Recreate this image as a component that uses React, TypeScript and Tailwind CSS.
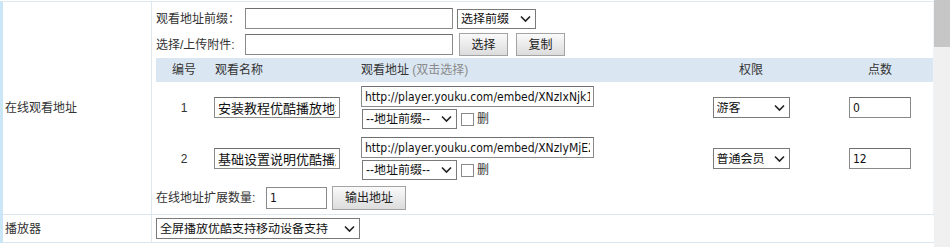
import React from "react";

const font = { fontFamily: '"Liberation Sans", "Noto Sans CJK SC", sans-serif' };
const inFont = { fontFamily: '"DejaVu Sans Condensed", "DejaVu Sans", "Noto Sans CJK SC", sans-serif' };

function Chevron() {
  return (
    <svg width="11" height="7" viewBox="0 0 11 7" className="pointer-events-none absolute right-[5px] top-1/2 -translate-y-1/2">
      <polyline points="1,1 5.5,5.5 10,1" fill="none" stroke="#222" strokeWidth="1.6" />
    </svg>
  );
}

function Sel({ w, h = 20, label }: { w: string; h?: number; label: string }) {
  return (
    <span className={`relative inline-flex shrink-0 ${w}`}>
      <select
        className={`w-full appearance-none border border-[#7a7a7a] bg-white pl-[3px] pr-[18px] text-[12px] text-[#111] leading-none outline-none ${h === 21 ? "h-[21px]" : "h-[20px]"}`}
        defaultValue={label}
      >
        <option value={label}>{label}</option>
      </select>
      <Chevron />
    </span>
  );
}

function Txt({ w, value, big }: { w: string; value: string; big?: boolean }) {
  return (
    <input
      readOnly
      defaultValue={value}
      style={inFont}
      className={`h-[21px] shrink-0 border border-[#8a8a8a] border-t-[#6f6f6f] bg-white px-[3px] text-[#111] outline-none ${big ? "text-[13px]" : "text-[12px]"} ${w}`}
    />
  );
}

function Btn({ w, h, label }: { w: string; h: string; label: string }) {
  return (
    <button className={`shrink-0 border border-[#a3a3a3] bg-gradient-to-b from-[#fafafa] to-[#dcdcdc] text-[12px] text-[#222] ${w} ${h}`}>
      {label}
    </button>
  );
}

function Row({ n, name, url, perm, pts }: { n: string; name: string; url: string; perm: string; pts: string }) {
  return (
    <div className="flex items-center pt-[4px] pb-[4px]">
      <div className="w-[56px] text-center">{n}</div>
      <div className="w-[145px] pl-[2px]">
        <Txt w="w-[126px]" value={name} big />
      </div>
      <div className="flex w-[311px] flex-col gap-[2px] pl-[4px]">
        <Txt w="w-[233px]" value={url} />
        <div className="flex items-center">
          <span className="ml-[1px]"><Sel w="w-[95px]" label="--地址前缀--" /></span>
          <span className="ml-[4px] inline-block h-[13px] w-[13px] border border-[#8a8a8a] bg-white" />
          <span className="ml-[3px]">删</span>
        </div>
      </div>
      <div className="flex w-[160px] justify-center">
        <span className="ml-[6px]"><Sel w="w-[77px]" h={21} label={perm} /></span>
      </div>
      <div className="flex w-[104px] justify-center">
        <Txt w="w-[62px]" value={pts} />
      </div>
    </div>
  );
}

export default function App() {
  return (
    <div className="flex h-[247px] w-[950px] overflow-hidden bg-white text-[12px] text-[#333]" style={font}>
      <div className="w-[934px] shrink-0 pt-[1px]">
        <div className="border-l-[3px] border-l-[#cbe7f7] border-t border-t-[#dde8f0]">
          <div className="flex border-b border-b-[#dbe7f0]">
            <div className="flex w-[149px] shrink-0 items-center border-r border-r-[#dde8f0] pl-[2px]">在线观看地址</div>
            <div className="flex-1 border-r border-r-[#eef3f7] pl-[4px] pt-[6px] pb-[4px]">
              <div className="flex items-center">
                <span className="w-[89px]">观看地址前缀：</span>
                <Txt w="w-[208px]" value="" />
                <span className="ml-[4px]"><Sel w="w-[79px]" label="选择前缀" /></span>
              </div>
              <div className="mt-[4px] flex items-center">
                <span className="w-[89px]">选择/上传附件:</span>
                <Txt w="w-[208px]" value="" />
                <span className="ml-[6px]"><Btn w="w-[49px]" h="h-[23px]" label="选择" /></span>
                <span className="ml-[8px]"><Btn w="w-[49px]" h="h-[23px]" label="复制" /></span>
              </div>
              <div className="mt-[2px]">
                <div className="flex h-[24px] items-center bg-[#dae7f2]">
                  <div className="w-[56px] text-center">编号</div>
                  <div className="w-[145px] pl-[3px]">观看名称</div>
                  <div className="w-[311px] pl-[4px]">
                    观看地址 <span className="text-[#8a8a8a]">(双击选择)</span>
                  </div>
                  <div className="w-[160px] pl-[6px] text-center">权限</div>
                  <div className="w-[104px] text-center">点数</div>
                </div>
                <Row n="1" name="安装教程优酷播放地址" url="http://player.youku.com/embed/XNzIxNjk1" perm="游客" pts="0" />
                <Row n="2" name="基础设置说明优酷播放" url="http://player.youku.com/embed/XNzIyMjE2" perm="普通会员" pts="12" />
              </div>
              <div className="mt-[2px] flex items-center">
                <span className="w-[110px]">在线地址扩展数量:</span>
                <input
                  readOnly
                  defaultValue="1"
                  style={inFont}
                  className="h-[22px] w-[61px] border border-[#8a8a8a] bg-white px-[3px] text-[12px] text-[#111] outline-none"
                />
                <span className="ml-[5px]"><Btn w="w-[74px]" h="h-[24px]" label="输出地址" /></span>
              </div>
            </div>
          </div>
          <div className="flex h-[28px] border-b border-b-[#dbe7f0]">
            <div className="flex w-[149px] shrink-0 items-center border-r border-r-[#dde8f0] pl-[2px]">播放器</div>
            <div className="flex flex-1 items-center pl-[4px]">
              <Sel w="w-[204px]" h={21} label="全屏播放优酷支持移动设备支持" />
            </div>
          </div>
        </div>
      </div>
      <div className="flex w-[16px] shrink-0 flex-col bg-[#f0f0f0]">
        <div className="h-[47px] bg-[#c6c6c6]" />
      </div>
    </div>
  );
}
